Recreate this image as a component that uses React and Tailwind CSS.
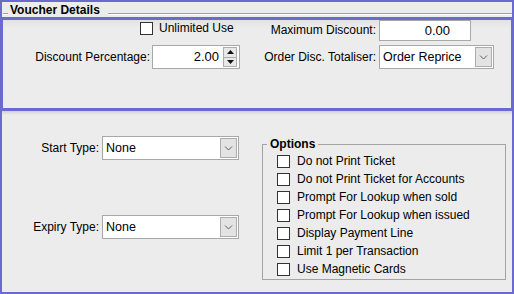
import React from 'react';

function Chevron() {
  return (
    <svg width="9" height="6" viewBox="0 0 9 6">
      <path d="M1 1.5 L4.5 5 L8 1.5" fill="none" stroke="#606060" strokeWidth="1" />
    </svg>
  );
}

function Combo({ value, className }) {
  return (
    <div className={`flex h-[24px] items-center border border-[#a8a8a8] bg-white ${className}`}>
      <span className="flex-1 pl-[3px] text-[12.5px] leading-none">{value}</span>
      <span className="mr-[1px] flex h-[20px] w-[17px] items-center justify-center border border-[#acacac] bg-[#e3e3e3]">
        <Chevron />
      </span>
    </div>
  );
}

function Check({ label }) {
  return (
    <div className="flex h-[18px] items-center gap-[7px]">
      <span className="h-[13px] w-[13px] border border-[#333] bg-white" />
      <span>{label}</span>
    </div>
  );
}

const options = [
  'Do not Print Ticket',
  'Do not Print Ticket for Accounts',
  'Prompt For Lookup when sold',
  'Prompt For Lookup when issued',
  'Display Payment Line',
  'Limit 1 per Transaction',
  'Use Magnetic Cards',
];

export default function App() {
  return (
    <div className="flex h-[294px] w-[514px] flex-col bg-[#ececec] font-['Liberation_Sans',Arial,sans-serif] text-[12px] text-black">
      {/* Group header */}
      <div className="flex h-[17px] border-x-2 border-t-2 border-[#6a6ad0]">
        <span className="ml-[1px] mt-[11px] h-[2px] w-[5px] border-t border-b border-t-[#a0a0a0] border-b-white" />
        <span className="self-end px-[2px] text-[12px] font-bold leading-[13px]">Voucher Details</span>
        <span className="ml-[6px] mt-[11px] h-[2px] flex-1 border-t border-b border-t-[#a0a0a0] border-b-white" />
      </div>

      {/* Highlighted area */}
      <div className="flex h-[94px] flex-col border-[3px] border-[#6a6ad0] bg-gradient-to-b from-[#e2e2e2] to-[#ececec] to-[8px]">
        <div className="flex h-[21px] items-start">
          <div className="flex w-[249px] items-center gap-[6px] pl-[137px] pt-[2px]">
            <span className="h-[13px] w-[13px] border border-[#333] bg-white" />
            <span className="leading-[13px]">Unlimited Use</span>
          </div>
          <div className="w-[127px] pr-[3px] pt-[3px] text-right leading-[14px]">Maximum Discount:</div>
          <div className="flex h-[21px] w-[92px] items-center justify-end border border-[#a8a8a8] bg-white pr-[20px] text-[13px]">
            0.00
          </div>
        </div>
        <div className="mt-[4px] flex h-[24px] items-center">
          <div className="w-[149px] pr-[2px] text-right">Discount Percentage:</div>
          <div className="flex h-[24px] w-[88px] items-center border border-[#a8a8a8] bg-white">
            <span className="flex-1 pr-[4px] text-right text-[13px]">2.00</span>
            <span className="mr-[2px] flex h-[20px] w-[14px] flex-col border border-[#adadad]">
              <span className="flex flex-1 items-center justify-center border-b border-[#adadad] bg-[#e8e8e8]">
                <svg width="7" height="4" viewBox="0 0 7 4"><path d="M0 4 L3.5 0 L7 4 Z" fill="#111" /></svg>
              </span>
              <span className="flex flex-1 items-center justify-center bg-[#e8e8e8]">
                <svg width="7" height="4" viewBox="0 0 7 4"><path d="M0 0 L3.5 4 L7 0 Z" fill="#111" /></svg>
              </span>
            </span>
          </div>
          <div className="w-[139px] pr-[3px] text-right">Order Disc. Totaliser:</div>
          <Combo value="Order Reprice" className="w-[115px]" />
        </div>
      </div>

      {/* Lower area */}
      <div className="flex flex-1 flex-col border-x-2 border-b-2 border-[#6a6ad0]">
        <div className="h-[4px] bg-gradient-to-b from-[#d2d2d2] to-[#ececec]" />
        <div className="flex flex-1">
          <div className="flex w-[260px] flex-col">
            <div className="mt-[21px] flex items-center">
              <div className="w-[100px] pr-[3px] text-right">Start Type:</div>
              <Combo value="None" className="w-[137px]" />
            </div>
            <div className="mt-[55px] flex items-center">
              <div className="w-[100px] pr-[3px] text-right">Expiry Type:</div>
              <Combo value="None" className="w-[137px]" />
            </div>
          </div>
          <fieldset className="mt-[21px] h-[144px] w-[244px] border border-[#a3a3a3]">
            <legend className="ml-[4px] px-[3px] font-bold leading-[16px]">Options</legend>
            <div className="flex flex-col pl-[14px]">
              {options.map((o) => (
                <Check key={o} label={o} />
              ))}
            </div>
          </fieldset>
        </div>
      </div>
    </div>
  );
}
